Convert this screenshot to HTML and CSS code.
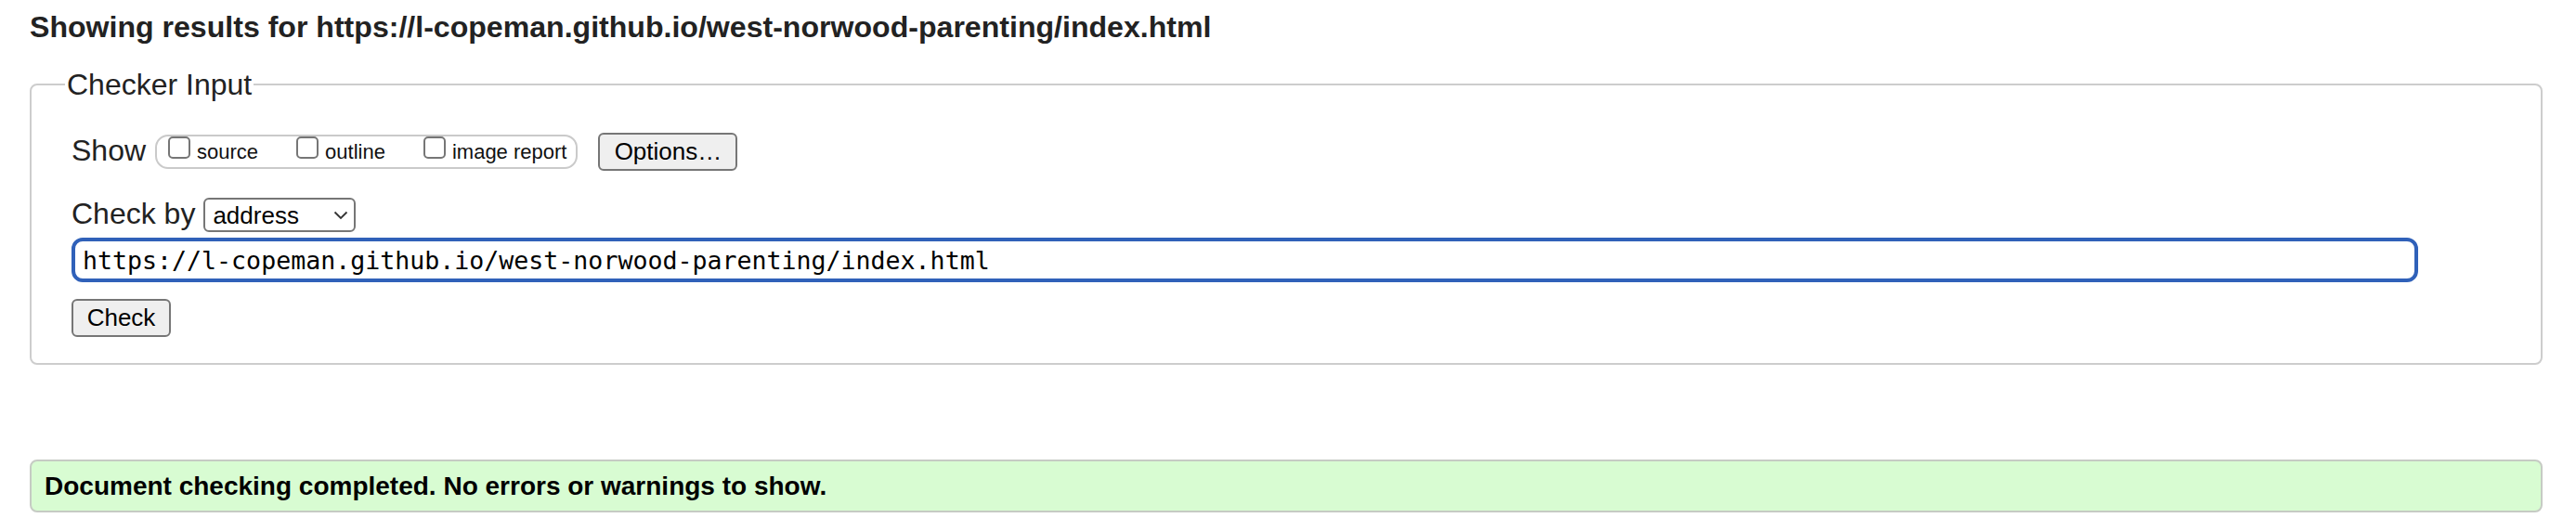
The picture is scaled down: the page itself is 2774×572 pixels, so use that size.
FILE: index.html
```html
<!DOCTYPE html>
<html lang="en">
<head>
<meta charset="utf-8">
<title>Nu Html Checker</title>
<link rel="stylesheet" href="styles.css">
</head>
<body>
<h2 class="results-title">Showing results for https://l-copeman.github.io/west-norwood-parenting/index.html</h2>
<form class="checker-form">
  <fieldset class="checker-input">
    <legend class="checker-legend">Checker Input</legend>
    <div class="row show-row">
      <span class="row-label">Show</span>
      <div class="check-group">
        <label class="check-item"><input type="checkbox" class="check-box"><span class="check-text">source</span></label>
        <label class="check-item"><input type="checkbox" class="check-box"><span class="check-text">outline</span></label>
        <label class="check-item last"><input type="checkbox" class="check-box"><span class="check-text">image report</span></label>
      </div>
      <button type="button" class="btn options-btn">Options…</button>
    </div>
    <div class="row checkby-row">
      <span class="row-label">Check by</span>
      <div class="select-wrap">
        <select class="method-select"><option>address</option></select>
        <svg class="chevron" width="16" height="10" viewBox="0 0 16 10"><path d="M1.5 1.5 L8 8 L14.5 1.5" fill="none" stroke="#333" stroke-width="1.8"/></svg>
      </div>
    </div>
    <input class="url-input" type="text" value="https://l-copeman.github.io/west-norwood-parenting/index.html">
    <div class="submit-row">
      <button type="button" class="btn check-btn">Check</button>
    </div>
  </fieldset>
</form>
<div class="success">
  <p class="success-text">Document checking completed. No errors or warnings to show.</p>
</div>
</body>
</html>
```
FILE: styles.css
```css
html, body {
  margin: 0;
  padding: 0;
  background: #fff;
}
body {
  padding: 0 36px 0 32px;
  font-family: "Liberation Sans", Arial, sans-serif;
  color: #222;
}
.results-title {
  margin: 11px 0 26px 0;
  font-size: 32.1px;
  line-height: 36px;
  font-weight: bold;
  color: #222;
}
.checker-form {
  margin: 0;
}
.checker-input {
  margin: 0;
  padding: 0 0 28px 36px;
  border: 2px solid #cdcdcd;
  border-radius: 8px;
  min-width: 0;
}
.checker-legend {
  padding: 0 2px;
  font-size: 32px;
  line-height: 36px;
  color: #222;
}
.row {
  display: flex;
  align-items: center;
  padding-left: 7px;
}
.show-row {
  margin-top: 34px;
  height: 41px;
}
.row-label {
  font-size: 32px;
  line-height: 36px;
  color: #222;
  margin-bottom: 4px;
}
.check-group {
  display: flex;
  align-items: flex-start;
  height: 33px;
  margin-left: 10px;
  padding: 0 10px 0 12px;
  border: 2px solid #cacaca;
  border-radius: 14px;
}
.check-item {
  display: flex;
  align-items: flex-start;
  margin-right: 41px;
}
.check-item.last {
  margin-right: 0;
}
.check-box {
  appearance: none;
  -webkit-appearance: none;
  margin: 0;
  width: 24px;
  height: 24px;
  border: 2px solid #767676;
  border-radius: 5px;
  background: #fff;
}
.check-text {
  margin-left: 7px;
  margin-top: 4px;
  font-size: 22px;
  line-height: 26px;
  color: #111;
}
.btn {
  font-family: "Liberation Sans", Arial, sans-serif;
  font-size: 26px;
  color: #000;
  background: #efefef;
  border: 2px solid #767676;
  border-radius: 6px;
  padding: 0;
  margin: 0;
}
.options-btn {
  margin-left: 22px;
  width: 150px;
  height: 41px;
}
.checkby-row {
  margin-top: 29px;
  height: 37px;
}
.select-wrap {
  position: relative;
  margin-left: 9px;
}
.method-select {
  appearance: none;
  -webkit-appearance: none;
  display: block;
  width: 164px;
  height: 37px;
  margin: 0;
  padding: 0 0 0 8px;
  font-family: "Liberation Sans", Arial, sans-serif;
  font-size: 26px;
  color: #000;
  background: #fff;
  border: 2px solid #767676;
  border-radius: 6px;
}
.chevron {
  position: absolute;
  right: 8px;
  top: 14px;
  pointer-events: none;
}
.url-input {
  display: block;
  box-sizing: border-box;
  width: 2527px;
  height: 48px;
  margin: 6px 0 0 7px;
  padding: 0 0 0 8px;
  font-family: "DejaVu Sans Mono", "Liberation Mono", monospace;
  font-size: 26.6px;
  color: #000;
  border: 4px solid #3061b9;
  border-radius: 12px;
  outline: none;
  background: #fff;
}
.submit-row {
  margin-top: 18px;
  padding-left: 7px;
}
.check-btn {
  width: 107px;
  height: 41px;
}
.success {
  margin-top: 102px;
  height: 53px;
  display: flex;
  align-items: center;
  padding-left: 14px;
  background: #d8fcd2;
  border: 2px solid #c6cbc4;
  border-radius: 8px;
}
.success-text {
  margin: 0;
  font-size: 28px;
  font-weight: bold;
  color: #000;
}
```
